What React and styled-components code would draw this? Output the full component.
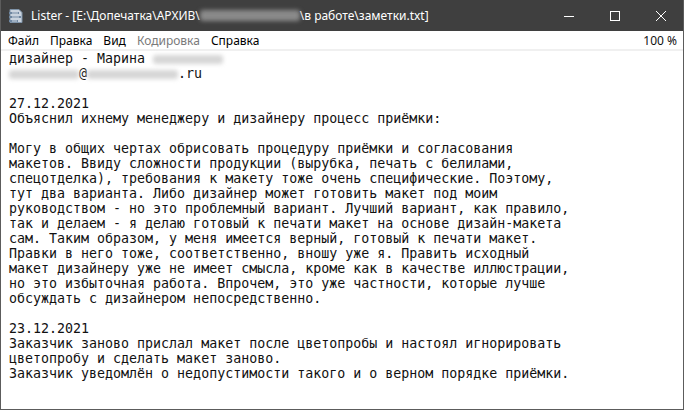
import React from 'react';
import styled, { createGlobalStyle } from 'styled-components';

const GlobalStyle = createGlobalStyle`
  html, body {
    margin: 0;
    padding: 0;
    background: #ffffff;
  }
`;

const Window = styled.div`
  width: 684px;
  height: 410px;
  box-sizing: border-box;
  display: flex;
  flex-direction: column;
  border: 1px solid #5c5c5c;
  border-top: none;
  background: #fff;
  overflow: hidden;
`;

const TitleBar = styled.div`
  height: 31px;
  flex: none;
  display: flex;
  align-items: center;
  background: #3f3f3f;
  color: #ffffff;
  font-family: "Noto Sans", "Open Sans", sans-serif;
  font-size: 12px;
  margin: 0 -1px;
`;

const AppIcon = styled.div`
  width: 16px;
  height: 16px;
  margin: 0 7px 0 8px;
  display: flex;
`;

const Title = styled.div`
  flex: 1;
  white-space: nowrap;
  display: flex;
  align-items: center;
`;

const Blur = styled.span`
  display: inline-block;
  width: ${(p) => p.$w}px;
  height: ${(p) => p.$h || 10}px;
  background: ${(p) => p.$c};
  filter: blur(2px);
  border-radius: 3px;
  vertical-align: middle;
`;

const Controls = styled.div`
  display: flex;
  height: 100%;
`;

const ControlButton = styled.div`
  width: 46px;
  height: 100%;
  display: flex;
  align-items: center;
  justify-content: center;
`;

const MenuBar = styled.div`
  height: 18px;
  flex: none;
  display: flex;
  align-items: center;
  gap: 11px;
  padding: 0 6px 0 7px;
  font-family: "Noto Sans", "Open Sans", sans-serif;
  font-size: 12px;
  color: #000;
`;

const MenuItem = styled.span`
  color: ${(p) => (p.$disabled ? '#7a7a7a' : '#000')};
`;

const Zoom = styled.span`
  margin-left: auto;
  color: #111;
`;

const Separator = styled.div`
  height: 2px;
  flex: none;
  background: #f0f0f0;
`;

const TextPane = styled.pre`
  flex: 1;
  margin: 0;
  padding: 0 0 0 8px;
  font-family: "DejaVu Sans Mono", "Liberation Mono", monospace;
  font-size: 13.3px;
  line-height: 15px;
  color: #111;
  white-space: pre;
`;

const lines = [
  'Объяснил ихнему менеджеру и дизайнеру процесс приёмки:',
  '',
  'Могу в общих чертах обрисовать процедуру приёмки и согласования',
  'макетов. Ввиду сложности продукции (вырубка, печать с белилами,',
  'спецотделка), требования к макету тоже очень специфические. Поэтому,',
  'тут два варианта. Либо дизайнер может готовить макет под моим',
  'руководством - но это проблемный вариант. Лучший вариант, как правило,',
  'так и делаем - я делаю готовый к печати макет на основе дизайн-макета',
  'сам. Таким образом, у меня имеется верный, готовый к печати макет.',
  'Правки в него тоже, соответственно, вношу уже я. Править исходный',
  'макет дизайнеру уже не имеет смысла, кроме как в качестве иллюстрации,',
  'но это избыточная работа. Впрочем, это уже частности, которые лучше',
  'обсуждать с дизайнером непосредственно.',
  '',
  '23.12.2021',
  'Заказчик заново прислал макет после цветопробы и настоял игнорировать',
  'цветопробу и сделать макет заново.',
  'Заказчик уведомлён о недопустимости такого и о верном порядке приёмки.',
];

const ListerIcon = () => (
  <svg width="16" height="16" viewBox="0 0 16 16">
    <path d="M2 1.5h9l3 3V14.5H2z" fill="#c9d3de" stroke="#7f93a8" strokeWidth="1" />
    <path d="M1 4h10v2H1zM1 8h12v2H1zM1 12h9v2H1z" fill="#6f87a1" />
    <path d="M4 5h6M4 9h7M4 13h5" stroke="#e8eef4" strokeWidth="0.8" />
  </svg>
);

export default function App() {
  return (
    <>
      <GlobalStyle />
      <Window>
        <TitleBar>
          <AppIcon>
            <ListerIcon />
          </AppIcon>
          <Title>
            Lister - [E:\Допечатка\АРХИВ\
            <Blur $w={100} $h={11} $c="#8a8a8a" />
            \в работе\заметки.txt]
          </Title>
          <Controls>
            <ControlButton>
              <svg width="10" height="10" viewBox="0 0 10 10">
                <path d="M0 5.5h10" stroke="#fff" strokeWidth="1" />
              </svg>
            </ControlButton>
            <ControlButton>
              <svg width="10" height="10" viewBox="0 0 10 10">
                <rect x="0.5" y="0.5" width="9" height="9" fill="none" stroke="#fff" strokeWidth="1" />
              </svg>
            </ControlButton>
            <ControlButton>
              <svg width="10" height="10" viewBox="0 0 10 10">
                <path d="M0 0L10 10M10 0L0 10" stroke="#fff" strokeWidth="1" />
              </svg>
            </ControlButton>
          </Controls>
        </TitleBar>
        <MenuBar>
          <MenuItem>Файл</MenuItem>
          <MenuItem>Правка</MenuItem>
          <MenuItem>Вид</MenuItem>
          <MenuItem $disabled>Кодировка</MenuItem>
          <MenuItem>Справка</MenuItem>
          <Zoom>100 %</Zoom>
        </MenuBar>
        <Separator />
        <TextPane>
          {'дизайнер - Марина '}
          <Blur $w={70} $h={9} $c="#d6d6d6" />
          {'\n'}
          <Blur $w={70} $h={9} $c="#d6d6d6" />
          {'@'}
          <Blur $w={91} $h={9} $c="#d6d6d6" />
          {'.ru\n\n27.12.2021\n'}
          {lines.join('\n')}
        </TextPane>
      </Window>
    </>
  );
}
